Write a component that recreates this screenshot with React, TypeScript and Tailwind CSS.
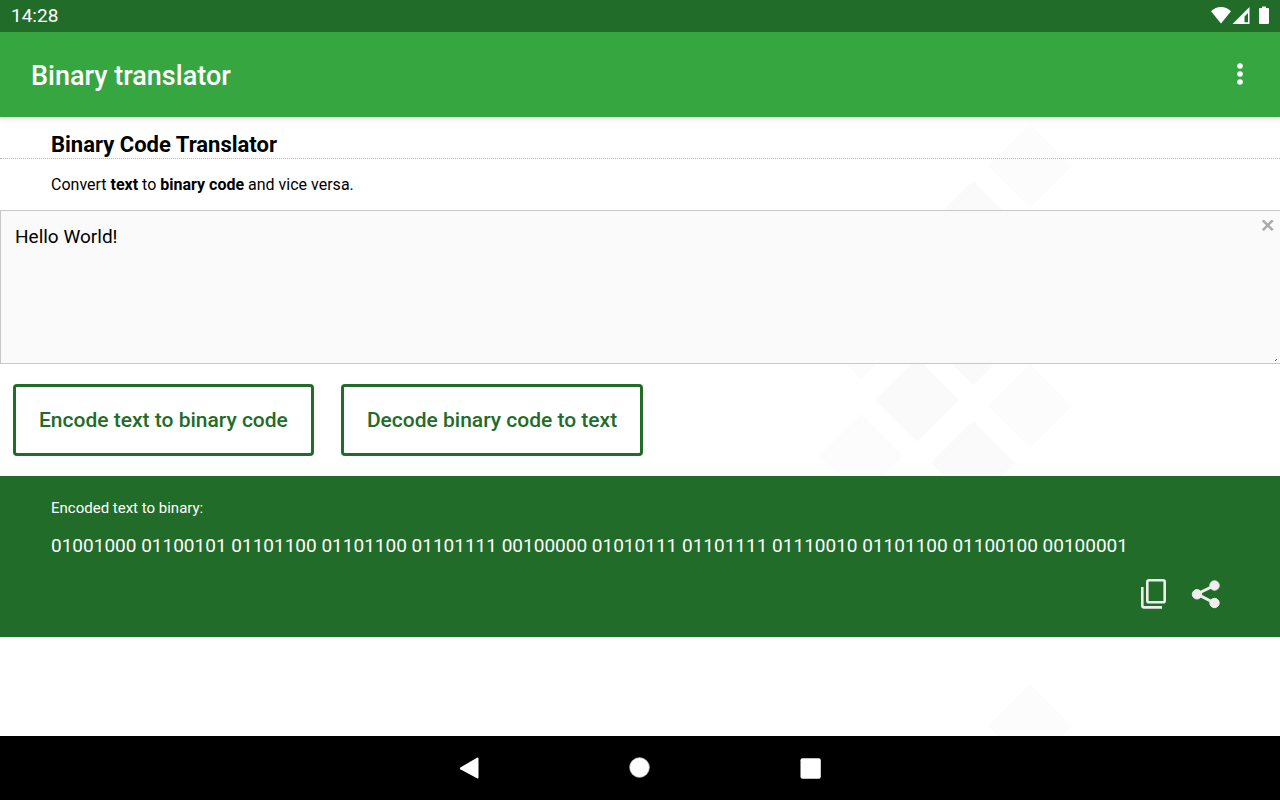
import { useState } from "react";

const toBinary = (text: string) =>
  Array.from(new TextEncoder().encode(text))
    .map((byte) => byte.toString(2).padStart(8, "0"))
    .join(" ");

const toText = (code: string) =>
  new TextDecoder().decode(
    Uint8Array.from(
      code
        .trim()
        .split(/\s+/)
        .map((byte) => parseInt(byte, 2) || 0),
    ),
  );

const StatusBar = () => (
  <div className="flex h-8 shrink-0 items-center justify-between bg-[#226c29] pr-2.5 pl-[11px] text-white">
    <span className="text-[19px] leading-8">14:28</span>
    <svg className="h-5 w-[60px]" viewBox="0 0 60 20" fill="#fff">
      <path d="M1 5.2C6.500 -0.500 15.500 -0.500 21 5.200L11 17.500Z" />
      <path fillRule="evenodd" d="M39.500 1V18H22.500ZM38 7L34.500 10.500V16.300H38Z" />
      <path d="M52 0.500H56V2H58Q59 2 59 3V17Q59 18 58 18H50Q49 18 49 17V3Q49 2 50 2H52Z" />
    </svg>
  </div>
);

const AppBar = () => (
  <header className="relative z-10 flex h-[85px] shrink-0 items-center justify-between bg-[#36a641] pr-7 pl-[31px] text-white shadow-[0_3px_4px_rgba(0,0,0,0.08)]">
    <span className="pt-0.5 text-[27px] leading-8 font-medium">
      Binary translator
    </span>
    <button aria-label="More options" className="flex w-6 justify-center pb-0.5">
      <svg className="h-6 w-2" viewBox="0 0 8 24" fill="#fff">
        <circle cx="4" cy="4" r="2.800" />
        <circle cx="4" cy="12" r="2.800" />
        <circle cx="4" cy="20" r="2.800" />
      </svg>
    </button>
  </header>
);

// faint diamonds behind the page content
const Pattern = () => (
  <svg
    className="pointer-events-none absolute top-0 right-0 h-[619px] w-[480px]"
    viewBox="0 0 480 619"
    aria-hidden="true"
  >
    <g fill="#fcfcfc">
      <path d="M230 7l42 42-42 42-42-42z" />
      <path d="M230 247l42 42-42 42-42-42z" />
      <path d="M230 567l42 42-42 42-42-42z" />
      <path d="M61 178l42 42-42 42-42-42z" />
      <path d="M61 297l42 42-42 42-42-42z" />
    </g>
    <g fill="#fafafa">
      <path d="M173 64l42 42-42 42-42-42z" />
      <path d="M117 241l42 42-42 42-42-42z" />
      <path d="M173 184l42 42-42 42-42-42z" />
      <path d="M173 304l42 42-42 42-42-42z" />
    </g>
  </svg>
);

const NavBar = () => (
  <nav className="flex h-16 shrink-0 items-center justify-center gap-[147px] bg-black">
    <button aria-label="Back">
      <svg className="h-6 w-6" viewBox="0 0 24 24" fill="#fff">
        <path d="M3.300 11.500L20 1.700Q21.500 1 21.500 2.500V21.500Q21.500 23 20 22.300L3.300 13.300Q2.300 12.400 3.300 11.500Z" />
      </svg>
    </button>
    <button aria-label="Home">
      <svg className="h-6 w-6" viewBox="0 0 24 24">
        <circle cx="11.500" cy="11.500" r="10" fill="#fff" stroke="#888" strokeWidth="0.600" />
      </svg>
    </button>
    <button aria-label="Overview">
      <svg className="h-6 w-6" viewBox="0 0 24 24" fill="#fff">
        <rect x="1.500" y="2.200" width="20.300" height="20.500" rx="2" />
      </svg>
    </button>
  </nav>
);

const actionClass =
  "h-[72px] rounded-[4px] border-3 border-[#226c29] px-[23px] text-[21px] leading-8 font-medium text-[#226c29]";

const App = () => {
  const [text, setText] = useState("Hello World!");
  const [label, setLabel] = useState("Encoded text to binary:");
  const [result, setResult] = useState(toBinary("Hello World!"));

  const encode = () => {
    setLabel("Encoded text to binary:");
    setResult(toBinary(text));
  };

  const decode = () => {
    setLabel("Decoded binary to text:");
    setResult(toText(text));
  };

  return (
    <div className="flex min-h-screen flex-col bg-white font-['Roboto',sans-serif] text-black">
      <StatusBar />
      <AppBar />
      <main className="relative flex-1 overflow-hidden">
        <Pattern />
        <div className="relative">
          <h1 className="border-b border-dotted border-[#b5b5b5] pt-3.5 pl-[51px] text-[22px] leading-[27px] font-bold">
            Binary Code Translator
          </h1>
          <p className="pt-3.5 pb-[13px] pl-[51px] text-[16px] leading-6">
            Convert <b>text</b> to <b>binary code</b> and vice versa.
          </p>
          <div className="relative">
            <textarea
              aria-label="Text or binary code"
              className="block h-[154px] w-full resize-none border border-r-0 border-[#c8c8c8] bg-[#fafafa] px-3.5 py-3 text-[19px] leading-7 outline-none"
              value={text}
              onChange={(e) => setText(e.target.value)}
            />
            <button
              aria-label="Clear"
              className="absolute top-2.5 right-1.5"
              onClick={() => setText("")}
            >
              <svg className="h-3 w-3" viewBox="0 0 12 12" stroke="#aaa" strokeWidth="2.600">
                <path d="M0.800 0.300L10.700 10.200M10.700 0.300L0.800 10.200" />
              </svg>
            </button>
            <svg className="absolute right-0.5 bottom-0.5 h-[3px] w-[3px]" viewBox="0 0 3 3" fill="#555">
              <path d="M1 0h1v1H1zM0 1h1v1H0z" />
            </svg>
          </div>
          <div className="flex flex-wrap gap-[27px] px-[13px] py-5">
            <button className={actionClass} onClick={encode}>
              Encode text to binary code
            </button>
            <button className={actionClass} onClick={decode}>
              Decode binary code to text
            </button>
          </div>
          <section className="bg-[#226c29] px-[51px] pt-5 pb-[27px] text-white">
            <p className="text-[15px] leading-6">{label}</p>
            <p className="pt-3 text-[19px] leading-7">{result}</p>
            <div className="flex justify-end gap-[22px] pt-[18px] pr-[7px]">
              <button
                aria-label="Copy"
                onClick={() => navigator.clipboard?.writeText(result)}
              >
                <svg className="h-8 w-8" viewBox="0 0 32 32" fill="none" stroke="#eee" strokeWidth="2.600">
                  <rect x="11.300" y="2.300" width="17.400" height="21.900" rx="1.500" />
                  <path d="M6.300 9V27.500Q6.300 29.400 8.200 29.400H26" />
                </svg>
              </button>
              <button aria-label="Share">
                <svg className="h-8 w-8" viewBox="0 0 32 32" fill="#eee" stroke="#eee">
                  <path d="M24.500 7.500L7 16L24.500 25" fill="none" strokeWidth="3" />
                  <circle cx="24.500" cy="7.500" r="4.700" />
                  <circle cx="7" cy="16.300" r="4.700" />
                  <circle cx="24.500" cy="25" r="4.700" />
                </svg>
              </button>
            </div>
          </section>
        </div>
      </main>
      <NavBar />
    </div>
  );
};

export default App;
